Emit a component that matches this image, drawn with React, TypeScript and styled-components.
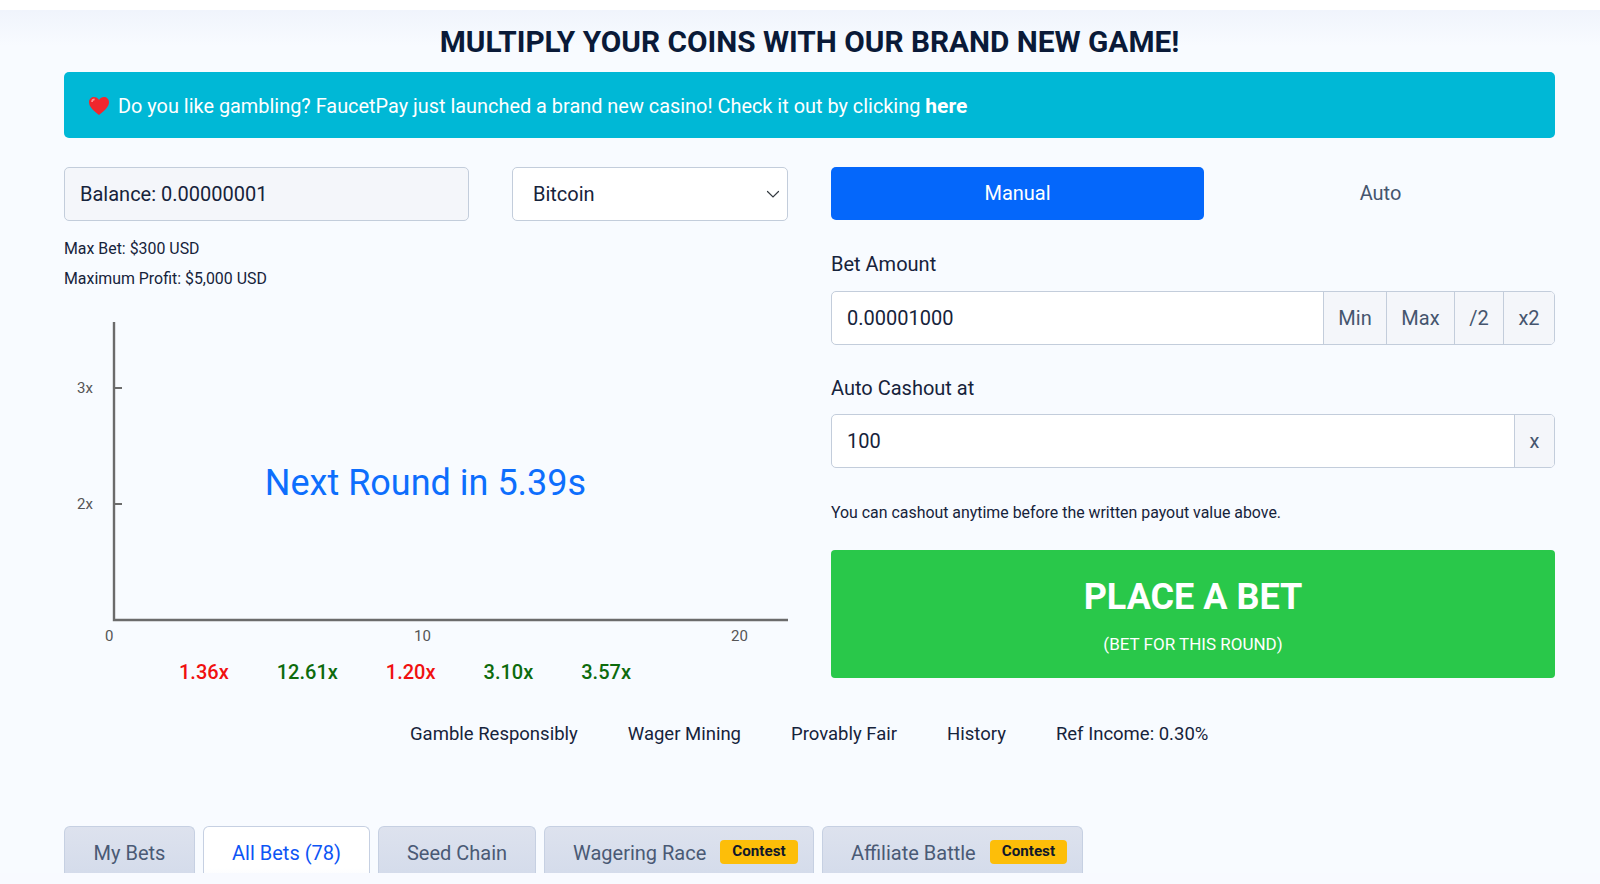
import styled, { createGlobalStyle } from "styled-components";

const GlobalStyle = createGlobalStyle`
    * {
        box-sizing: border-box;
    }
    html, body {
        margin: 0;
        padding: 0;
        background: #f8fbff;
        font-family: Roboto, "Liberation Sans", sans-serif;
        color: #0b1a33;
    }
`;

const Page = styled.div`
    height: 884px;
    overflow: hidden;
    display: flex;
    flex-direction: column;
`;

const TopBar = styled.div`
    height: 10px;
    flex: none;
    background: #fff;
`;

const Main = styled.main`
    height: 863px;
    flex: none;
    overflow: hidden;
    padding: 0 45px 0 64px;
    background: linear-gradient(180deg, #f0f4fc 0, #f8fbff 36px);
`;

const Heading = styled.h1`
    margin: 0;
    height: 62px;
    line-height: 63px;
    text-align: center;
    font-size: 29.8px;
    font-weight: 700;
    color: #0a1a38;
`;

const Alert = styled.div`
    height: 66px;
    display: flex;
    align-items: center;
    gap: 8px;
    padding: 2px 16px 0 24px;
    border-radius: 5px;
    background: #00b8d6;
    color: #fff;
    font-size: 19.9px;
    b {
        font-size: 21px;
        font-weight: 700;
    }
`;

const Columns = styled.div`
    display: grid;
    grid-template-columns: 724px 724px;
    gap: 43px;
    margin-top: 29px;
`;

const Column = styled.div`
    display: flex;
    flex-direction: column;
`;

const BalanceRow = styled.div`
    display: grid;
    grid-template-columns: 405px 276px;
    gap: 43px;
`;

const Field = styled.div<{ $muted?: boolean }>`
    height: 54px;
    display: flex;
    align-items: center;
    justify-content: space-between;
    padding: 0 7px 0 ${(props) => (props.$muted ? "15px" : "20px")};
    border: 1px solid #c3cddb;
    border-radius: 5px;
    background: ${(props) => (props.$muted ? "#f4f6fa" : "#fff")};
    font-size: 20px;
    color: #16233b;
`;

const LimitList = styled.div`
    margin-top: 13px;
`;

const LimitText = styled.div`
    height: 30px;
    line-height: 30px;
    font-size: 15.9px;
    color: #16233b;
`;

const ChartBox = styled.div`
    position: relative;
    height: 337px;
    margin-top: 28px;
`;

const ChartSvg = styled.svg`
    display: block;
    width: 100%;
    height: 100%;
    text {
        font-family: Roboto, "Liberation Sans", sans-serif;
        font-size: 15px;
        fill: #555;
    }
`;

const Countdown = styled.div`
    position: absolute;
    left: 200px;
    width: 323px;
    top: 139px;
    text-align: center;
    white-space: nowrap;
    font-size: 36px;
    line-height: 44px;
    color: #0d6efd;
`;

const Rounds = styled.div`
    display: flex;
    gap: 48px;
    padding-left: 115px;
    height: 24px;
    margin-top: 1px;
    line-height: 24px;
    font-size: 20px;
    font-weight: 500;
`;

const Round = styled.span<{ $win?: boolean }>`
    color: ${(props) => (props.$win ? "#0d6b0d" : "#f01010")};
`;

const ModeRow = styled.div`
    display: grid;
    grid-template-columns: 373px 1fr;
    margin-bottom: 1px;
`;

const ModeButton = styled.div<{ $active?: boolean }>`
    height: 53px;
    line-height: 52px;
    padding-left: ${(props) => (props.$active ? "0" : "2px")};
    text-align: center;
    font-size: 20px;
    border-radius: 5px;
    background: ${(props) => (props.$active ? "#0467fb" : "transparent")};
    color: ${(props) => (props.$active ? "#fff" : "#45556e")};
`;

const FieldLabel = styled.div<{ $gap: number }>`
    height: 24px;
    line-height: 24px;
    margin-top: 31px;
    margin-bottom: ${(props) => props.$gap}px;
    font-size: 20px;
    color: #16233b;
`;

const InputGroup = styled.div`
    height: 54px;
    display: flex;
    border: 1px solid #c3cddb;
    border-radius: 5px;
    background: #fff;
    overflow: hidden;
    font-size: 20px;
`;

const InputValue = styled.div`
    flex: 1;
    padding-left: 15px;
    line-height: 52px;
    color: #16233b;
`;

const Addon = styled.div<{ $width: number }>`
    width: ${(props) => props.$width}px;
    flex: none;
    line-height: 52px;
    text-align: center;
    border-left: 1px solid #c3cddb;
    background: #f4f6fa;
    color: #45556e;
`;

const Note = styled.div`
    height: 20px;
    line-height: 20px;
    margin-top: 35px;
    font-size: 15.9px;
    color: #16233b;
`;

const BetButton = styled.div`
    height: 128px;
    margin-top: 27px;
    padding-top: 26px;
    border-radius: 4px;
    background: #29c84a;
    color: #fff;
    text-align: center;
`;

const BetTitle = styled.div`
    font-size: 36px;
    font-weight: 700;
    line-height: 42px;
`;

const BetSub = styled.div`
    margin-top: 15px;
    font-size: 17px;
    line-height: 22px;
`;

const LinkRow = styled.nav`
    display: flex;
    gap: 50px;
    margin-top: 38px;
    padding-left: 346px;
    height: 24px;
    line-height: 24px;
    font-size: 18.5px;
    color: #16233b;
`;

const TabRow = styled.div`
    display: flex;
    gap: 8px;
    margin-top: 80px;
`;

const Tab = styled.div<{ $active?: boolean; $width: number; $badge?: boolean }>`
    width: ${(props) => props.$width}px;
    height: 60px;
    display: flex;
    align-items: flex-start;
    justify-content: ${(props) => (props.$badge ? "flex-start" : "center")};
    gap: 14px;
    padding: 13px 0 0 ${(props) => (props.$badge ? "28px" : "0")};
    line-height: 26px;
    font-size: 20px;
    border: 1px solid #c6d0e2;
    border-bottom: 0;
    border-radius: 6px 6px 0 0;
    background: ${(props) =>
        props.$active
            ? "linear-gradient(180deg, #fff 70%, #f4f7fd)"
            : "linear-gradient(180deg, #dde2ee, #d2daea)"};
    color: ${(props) => (props.$active ? "#0d55f5" : "#4a5a75")};
`;

const ContestBadge = styled.span`
    padding: 0 12px;
    height: 24px;
    line-height: 23px;
    border-radius: 4px;
    background: #fdbe09;
    color: #10182a;
    font-size: 15.2px;
    font-weight: 700;
`;

const BottomBand = styled.div`
    flex: 1;
    background: #f8faff;
`;

function Heart() {
    return (
        <svg width="22" height="20" viewBox="0 0 22 20">
            <path
                d="M11 19 C6 15 1 11 1 6.2 C1 3 3.4 1 6 1 C8 1 10 2 11 4 C12 2 14 1 16 1 C18.6 1 21 3 21 6.2 C21 11 16 15 11 19 Z"
                fill="#f0272d"
            />
            <path d="M4 6 C4 4.4 5.2 3.4 6.6 3.4" stroke="#ff8f8f" strokeWidth="1.6" fill="none" />
        </svg>
    );
}

function Chevron() {
    return (
        <svg width="14" height="14" viewBox="0 0 14 14">
            <path d="M1.5 4.5l5.5 5.5 5.5-5.5" fill="none" stroke="#343a40" strokeWidth="1.2" strokeLinecap="round" />
        </svg>
    );
}

// x/y are measured inside the chart box, which is 724 wide
function Chart() {
    return (
        <ChartSvg viewBox="0 0 724 337">
            <path d="M50 0V298H724" fill="none" stroke="#6b6b6b" strokeWidth="2.4" />
            <path d="M50 66h8M50 182h8" stroke="#6b6b6b" strokeWidth="2" />
            <text x="13" y="71">3x</text>
            <text x="13" y="187">2x</text>
            <text x="41" y="319">0</text>
            <text x="350" y="319">10</text>
            <text x="667" y="319">20</text>
        </ChartSvg>
    );
}

const rounds = [
    { value: "1.36x", win: false },
    { value: "12.61x", win: true },
    { value: "1.20x", win: false },
    { value: "3.10x", win: true },
    { value: "3.57x", win: true },
];

const links = ["Gamble Responsibly", "Wager Mining", "Provably Fair", "History", "Ref Income: 0.30%"];

export default function App() {
    return (
        <Page>
            <GlobalStyle />
            <TopBar />
            <Main>
                <Heading>MULTIPLY YOUR COINS WITH OUR BRAND NEW GAME!</Heading>
                <Alert>
                    <Heart />
                    <span>
                        Do you like gambling? FaucetPay just launched a brand new casino! Check it out by clicking <b>here</b>
                    </span>
                </Alert>
                <Columns>
                    <Column>
                        <BalanceRow>
                            <Field $muted>Balance: 0.00000001</Field>
                            <Field>
                                Bitcoin
                                <Chevron />
                            </Field>
                        </BalanceRow>
                        <LimitList>
                            <LimitText>Max Bet: $300 USD</LimitText>
                            <LimitText>Maximum Profit: $5,000 USD</LimitText>
                        </LimitList>
                        <ChartBox>
                            <Chart />
                            <Countdown>Next Round in 5.39s</Countdown>
                        </ChartBox>
                        <Rounds>
                            {rounds.map((round) => (
                                <Round key={round.value} $win={round.win}>
                                    {round.value}
                                </Round>
                            ))}
                        </Rounds>
                    </Column>
                    <Column>
                        <ModeRow>
                            <ModeButton $active>Manual</ModeButton>
                            <ModeButton>Auto</ModeButton>
                        </ModeRow>
                        <FieldLabel $gap={15}>Bet Amount</FieldLabel>
                        <InputGroup>
                            <InputValue>0.00001000</InputValue>
                            <Addon $width={63}>Min</Addon>
                            <Addon $width={68}>Max</Addon>
                            <Addon $width={49}>/2</Addon>
                            <Addon $width={51}>x2</Addon>
                        </InputGroup>
                        <FieldLabel $gap={14}>Auto Cashout at</FieldLabel>
                        <InputGroup>
                            <InputValue>100</InputValue>
                            <Addon $width={40}>x</Addon>
                        </InputGroup>
                        <Note>You can cashout anytime before the written payout value above.</Note>
                        <BetButton>
                            <BetTitle>PLACE A BET</BetTitle>
                            <BetSub>(BET FOR THIS ROUND)</BetSub>
                        </BetButton>
                    </Column>
                </Columns>
                <LinkRow>
                    {links.map((link) => (
                        <span key={link}>{link}</span>
                    ))}
                </LinkRow>
                <TabRow>
                    <Tab $width={131}>My Bets</Tab>
                    <Tab $width={167} $active>All Bets (78)</Tab>
                    <Tab $width={158}>Seed Chain</Tab>
                    <Tab $width={270} $badge>
                        Wagering Race <ContestBadge>Contest</ContestBadge>
                    </Tab>
                    <Tab $width={261} $badge>
                        Affiliate Battle <ContestBadge>Contest</ContestBadge>
                    </Tab>
                </TabRow>
            </Main>
            <BottomBand />
        </Page>
    );
}
